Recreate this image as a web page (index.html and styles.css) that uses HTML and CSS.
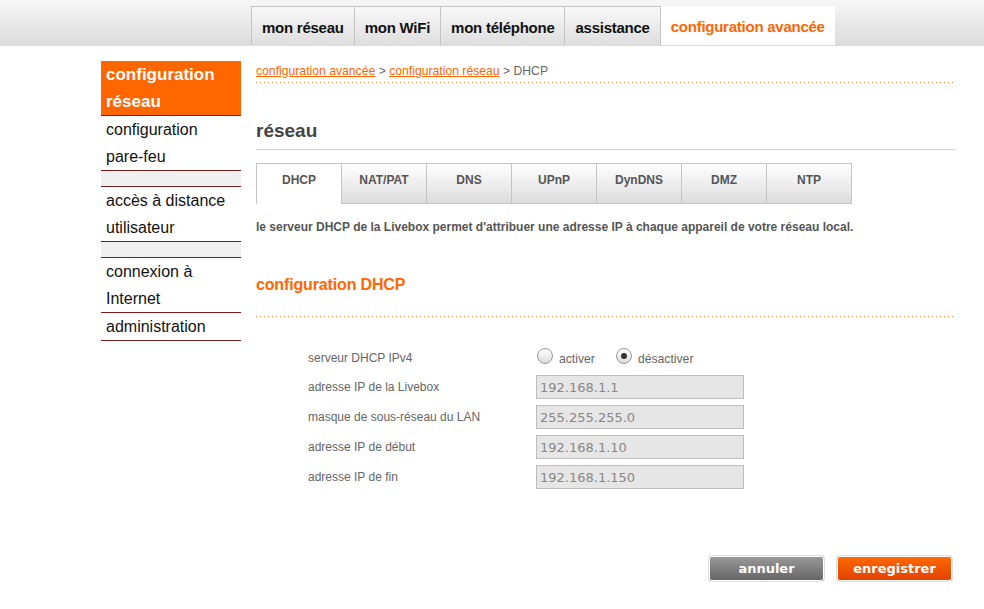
FILE: index.html
```html
<!DOCTYPE html>
<html lang="fr">
<head>
  <meta charset="UTF-8" />
  <title>configuration avancée - DHCP</title>
  <link rel="stylesheet" href="styles.css">
</head>
<body>

  <header class="topbar">
    <nav class="mainnav">
      <a class="mainnav-item" href="#">mon réseau</a>
      <a class="mainnav-item" href="#">mon WiFi</a>
      <a class="mainnav-item" href="#">mon téléphone</a>
      <a class="mainnav-item" href="#">assistance</a>
      <a class="mainnav-item active" href="#">configuration avancée</a>
    </nav>
  </header>

  <div class="page">
    <aside class="sidemenu">
      <a class="side-item active" href="#">configuration réseau</a>
      <a class="side-item" href="#">configuration pare-feu</a>
      <div class="side-gap"></div>
      <a class="side-item" href="#">accès à distance utilisateur</a>
      <div class="side-gap"></div>
      <a class="side-item" href="#">connexion à Internet</a>
      <a class="side-item" href="#">administration</a>
    </aside>

    <main class="content">
      <div class="breadcrumb">
        <a href="#">configuration avancée</a> &gt; <a href="#">configuration réseau</a> &gt; DHCP
      </div>

      <h1 class="page-title">réseau</h1>

      <ul class="subtabs">
        <li class="subtab active">DHCP</li>
        <li class="subtab">NAT/PAT</li>
        <li class="subtab">DNS</li>
        <li class="subtab">UPnP</li>
        <li class="subtab">DynDNS</li>
        <li class="subtab">DMZ</li>
        <li class="subtab">NTP</li>
      </ul>

      <p class="intro">le serveur DHCP de la Livebox permet d'attribuer une adresse IP à chaque appareil de votre réseau local.</p>

      <h2 class="section-title">configuration DHCP</h2>

      <div class="form">
        <div class="form-row radio-row">
          <span class="form-label">serveur DHCP IPv4</span>
          <span class="radios">
            <span class="radio"></span><span class="radio-label">activer</span>
            <span class="radio checked"></span><span class="radio-label">désactiver</span>
          </span>
        </div>
        <div class="form-row">
          <span class="form-label">adresse IP de la Livebox</span>
          <input type="text" class="field" value="192.168.1.1" readonly />
        </div>
        <div class="form-row">
          <span class="form-label">masque de sous-réseau du LAN</span>
          <input type="text" class="field" value="255.255.255.0" readonly />
        </div>
        <div class="form-row">
          <span class="form-label">adresse IP de début</span>
          <input type="text" class="field" value="192.168.1.10" readonly />
        </div>
        <div class="form-row">
          <span class="form-label">adresse IP de fin</span>
          <input type="text" class="field" value="192.168.1.150" readonly />
        </div>
      </div>

      <div class="actions">
        <button class="btn btn-cancel">annuler</button>
        <button class="btn btn-save">enregistrer</button>
      </div>
    </main>
  </div>

</body>
</html>
```

FILE: styles.css
```css
body {
  margin: 0;
  font-family: "Liberation Sans", Arial, sans-serif;
  background-color: #ffffff;
  color: #333;
}

a {
  text-decoration: none;
}

/* top navigation */
.topbar {
  height: 46px;
  background: linear-gradient(#f6f6f6, #dcdcdc);
}

.mainnav {
  display: flex;
  padding-left: 251px;
  padding-top: 6px;
}

.mainnav-item {
  display: block;
  height: 38px;
  line-height: 41px;
  padding: 0 10px;
  border: 1px solid #c4c4c4;
  border-bottom: none;
  border-right: none;
  background: linear-gradient(#f8f8f8, #dedede);
  color: #111;
  font-weight: bold;
  font-size: 15px;
  letter-spacing: -0.25px;
}

.mainnav-item:nth-child(4) {
  border-right: 1px solid #c4c4c4;
}

.mainnav-item.active {
  background: #ffffff;
  color: #ff6600;
  border: none;
  height: 39px;
  line-height: 42px;
}

/* page */
.page {
  display: flex;
  padding-left: 101px;
  padding-top: 15px;
}

.sidemenu {
  width: 140px;
  flex-shrink: 0;
}

.side-item {
  display: block;
  padding: 0 5px;
  font-size: 16px;
  line-height: 27px;
  color: #111;
  border-bottom: 1px solid #7a1c1c;
}

.side-item.active {
  background-color: #ff6600;
  color: #ffffff;
  font-weight: bold;
  font-size: 17px;
}

.side-gap {
  height: 15px;
  background-color: #f0f0f0;
  border-bottom: 1px solid #7a1c1c;
}

.content {
  width: 700px;
  margin-left: 15px;
}

.breadcrumb {
  font-size: 12.2px;
  line-height: 16px;
  padding-top: 2px;
  padding-bottom: 4px;
  color: #666;
  background: linear-gradient(to right, #f28a4a 1px, transparent 1px) repeat-x left bottom;
  background-size: 4px 1px;
}

.breadcrumb a {
  color: #ff6600;
  text-decoration: underline;
}

.page-title {
  margin: 37px 0 0;
  padding-bottom: 7px;
  font-size: 19px;
  color: #444;
  border-bottom: 1px solid #d6d6d6;
}

.subtabs {
  display: flex;
  list-style: none;
  margin: 13px 0 0;
  padding: 0;
}

.subtab {
  width: 84px;
  height: 39px;
  text-align: center;
  line-height: 32px;
  font-weight: bold;
  font-size: 12px;
  color: #555;
  border: 1px solid #c4c4c4;
  border-left: none;
  background: linear-gradient(#ffffff, #dcdcdc);
}

.subtab.active {
  background: #ffffff;
  border-left: 1px solid #c4c4c4;
  border-bottom: none;
  height: 40px;
}

.intro {
  margin: 16px 0 0;
  font-weight: bold;
  font-size: 12px;
  color: #555;
}

.section-title {
  margin: 42px 0 0;
  padding-bottom: 23px;
  font-size: 16px;
  letter-spacing: -0.15px;
  color: #ff6600;
  background: linear-gradient(to right, #f28a4a 1px, transparent 1px) repeat-x left bottom;
  background-size: 4px 1px;
}

/* form */
.form {
  display: flex;
  flex-direction: column;
  gap: 6px;
  margin-top: 30px;
  padding-left: 52px;
}

.form-row {
  display: flex;
  align-items: center;
  height: 24px;
}

.radio-row {
  height: 22px;
}

.form-label {
  width: 228px;
  font-size: 12px;
  color: #666;
}

.radios {
  display: flex;
  align-items: center;
  font-size: 12.2px;
  color: #666;
  padding-top: 2px;
}

.radio {
  width: 14px;
  height: 14px;
  border: 1px solid #9a9a9a;
  border-radius: 50%;
  background: linear-gradient(#ffffff, #dcdcdc);
  margin: -6px 6px 0 1px;
  position: relative;
}

.radio.checked::after {
  content: "";
  position: absolute;
  left: 4px;
  top: 4px;
  width: 6px;
  height: 6px;
  border-radius: 50%;
  background-color: #333;
}

.radio-label {
  margin-right: 20px;
}

.field {
  width: 208px;
  height: 24px;
  box-sizing: border-box;
  border: 1px solid #bdbdbd;
  background-color: #e6e6e6;
  font-family: "DejaVu Sans", sans-serif;
  font-size: 13px;
  color: #888;
  padding: 1px 3px 0;
}

/* buttons */
.actions {
  display: flex;
  justify-content: flex-end;
  gap: 11px;
  margin-top: 66px;
  padding-right: 3px;
}

.btn {
  width: 117px;
  height: 27px;
  border: 1px solid #dedede;
  border-radius: 4px;
  color: #ffffff;
  font-family: "DejaVu Sans", sans-serif;
  font-weight: bold;
  font-size: 13px;
  box-shadow: inset 0 0 0 1px #ffffff;
}

.btn-cancel {
  background: linear-gradient(#9a9a9a, #646464);
}

.btn-save {
  background: linear-gradient(#ff6a00, #e04000);
}
```
